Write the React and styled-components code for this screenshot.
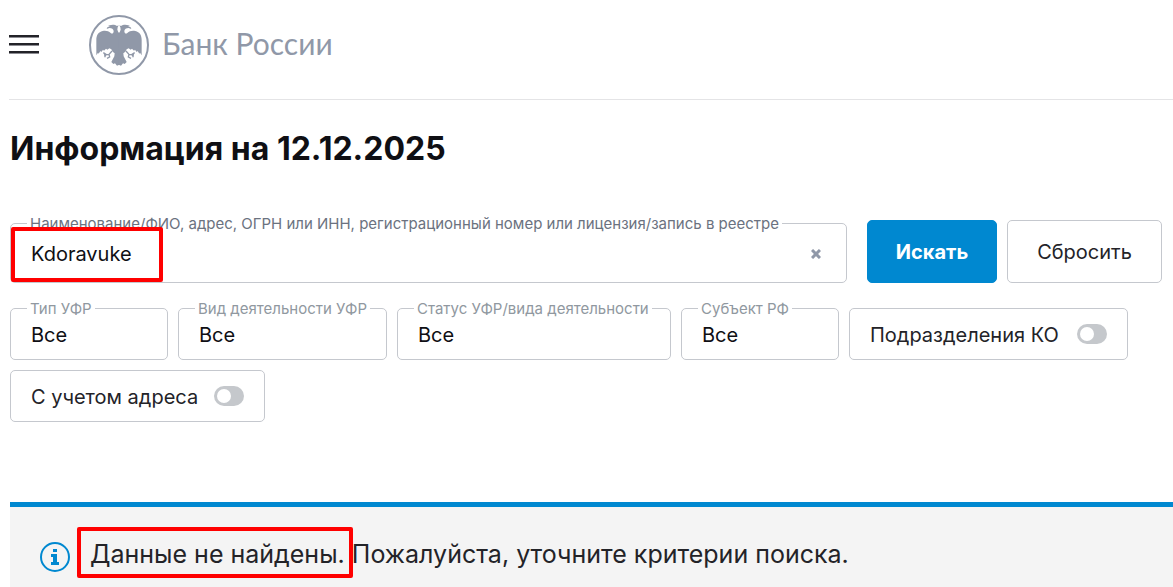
import React from 'react';
import styled, { createGlobalStyle } from 'styled-components';

const GlobalStyle = createGlobalStyle`
  * {
    box-sizing: border-box;
  }

  body {
    margin: 0;
    background: #fff;
    color: #232328;
    font-family: Inter, "Noto Sans", sans-serif;
    font-size: 20px;
    line-height: 24px;
  }

  button, input, select {
    font: inherit;
    color: inherit;
  }
`

const Page = styled.div`
  padding-left: 10px;
`

const Header = styled.header`
  display: flex;
  align-items: center;
  gap: 50px;
  height: 100px;
  padding-bottom: 10px;
  margin-left: -1px;
  border-bottom: 1px solid #e4e4e6;
`

const MenuButton = styled.button`
  display: flex;
  flex-direction: column;
  gap: 5px;
  padding: 0;
  border: 0;
  background: none;
  cursor: pointer;
`

const MenuLine = styled.span`
  width: 30px;
  height: 3px;
  border-bottom: 1px solid #8c8c92;
  background: #232328;
`

const Logo = styled.a`
  display: flex;
  align-items: center;
  gap: 13px;
  color: #9098a8;
  font-family: Lato, "Noto Sans", sans-serif;
  font-size: 30px;
  text-decoration: none;
`

const LogoText = styled.span`
  padding-bottom: 4px;
`

const Title = styled.h1`
  margin: 29px 0 51px;
  color: #0f0f14;
  font-size: 32px;
  font-weight: 700;
  line-height: 40px;
`

const Form = styled.form`
  padding-right: 11px;
`

const SearchRow = styled.div`
  display: flex;
  align-items: flex-end;
  gap: 10px;
  margin-bottom: 25px;
`

const Filters = styled.div`
  display: flex;
  flex-wrap: wrap;
  gap: 10px;
`

const Field = styled.div`
  position: relative;
  display: flex;
  align-items: center;
  width: ${props => props.$width || 'auto'};
  height: 52px;
  padding: 2px 20px 0;
  border: 1px solid #c5c8ce;
  border-radius: 5px;
`

const SearchField = styled(Field)`
  flex: 1;
  height: 60px;
  margin-right: 10px;
`

const FieldLabel = styled.label`
  position: absolute;
  top: -10px;
  left: 16px;
  padding: 0 3px;
  background: #fff;
  color: ${props => props.$dark ? '#6b7280' : '#9098a0'};
  font-size: 15px;
  line-height: 20px;
  white-space: nowrap;
`

const TextInput = styled.input`
  flex: 1;
  min-width: 0;
  padding: 0;
  border: 0;
  outline: 0;
  background: none;
  color: #0f0f14;
`

const Select = styled.select`
  width: 100%;
  padding: 0;
  border: 0;
  outline: 0;
  appearance: none;
  background: none;
  color: #0f0f14;
`

const ClearButton = styled.button`
  display: flex;
  padding: 5px;
  border: 0;
  background: none;
  cursor: pointer;
`

const Button = styled.button`
  width: ${props => props.$primary ? '130px' : '155px'};
  height: 63px;
  padding: 0;
  border: 1px solid ${props => props.$primary ? '#0088d0' : '#c5c8ce'};
  border-radius: 5px;
  background: ${props => props.$primary ? '#0088d0' : '#fff'};
  color: ${props => props.$primary ? '#fff' : '#232328'};
  font-weight: ${props => props.$primary ? 700 : 400};
  cursor: pointer;
`

const ToggleField = styled.label`
  display: flex;
  align-items: center;
  justify-content: space-between;
  width: ${props => props.$width};
  height: 52px;
  padding: 2px 20px 0;
  border: 1px solid #c5c8ce;
  border-radius: 5px;
  white-space: nowrap;
`

const Toggle = styled.input`
  display: flex;
  align-items: center;
  flex: none;
  width: 30px;
  height: 20px;
  margin: 0 0 2px;
  padding: 0 3px;
  border-radius: 10px;
  appearance: none;
  background: #c5c8cc;

  &::before {
    content: "";
    width: 14px;
    height: 14px;
    border-radius: 50%;
    background: #fff;
  }

  &:checked {
    justify-content: flex-end;
    background: #0088d0;
  }
`

const Message = styled.div`
  display: flex;
  align-items: center;
  gap: 20px;
  min-height: 85px;
  margin-top: 80px;
  padding: 20px 30px 0;
  border-top: 5px solid #0088d0;
  background: #f4f4f4;
`

const MessageText = styled.p`
  margin: 0 0 6px;
  font-size: 25px;
  line-height: 32px;
`

const Highlight = styled.span`
  position: relative;

  &::after {
    content: "";
    position: absolute;
    inset: -12px -8px -9px -13px;
    border: 4px solid #f00;
    border-radius: 2px;
  }
`

const FieldHighlight = styled.span`
  position: absolute;
  top: 3px;
  left: 0;
  width: 152px;
  height: 55px;
  border: 4px solid #f00;
  border-radius: 2px;
  pointer-events: none;
`

const EagleHalf = () => (
  <g>
    <path
      fill="currentColor"
      d="M91 54 L88 52 L85 44 L86 37 L89 31 L84 33 C79 29 69 28 62 31 L57 33 L63 34 L55 37 L53 42 L61 39 C69 39 73 43 74 48 C74 55 69 58 65 54 C59 48 50 46 41 48 C28 51 22 60 22 75 L22 121 L27 113 L29 116 L34 108 L37 111 L42 104 L45 107 L51 101 L55 104 L61 100 L67 103 L71 110 L77 115 L76 124 L67 141 L73 147 L78 145 L84 152 L91 149 Z"
    />
    <path
      fill="none"
      stroke="currentColor"
      strokeWidth="4"
      d="M69 108 L60 118 L45 120 M52 119 L43 113 M60 118 L62 126 L54 130 M50 120 L47 127"
    />
  </g>
)

const Emblem = () => (
  <svg width="60" height="60" viewBox="0 0 180 180" aria-hidden="true">
    <circle cx="90" cy="90" r="87" fill="none" stroke="currentColor" strokeWidth="6" />
    <EagleHalf />
    <g transform="matrix(-1 0 0 1 180 0)">
      <EagleHalf />
    </g>
  </svg>
)

const InfoIcon = () => (
  <svg width="30" height="30" viewBox="0 0 30 30" aria-hidden="true">
    <circle cx="15" cy="15" r="14" fill="none" stroke="#0088d0" strokeWidth="2" />
    <path fill="#0088d0" d="M13 7h4v3h-4zM11 12h6v8h2v3h-8v-3h2v-5h-2z" />
  </svg>
)

const filters = [
  { id: 'type', label: 'Тип УФР', width: '158px' },
  { id: 'activity', label: 'Вид деятельности УФР', width: '209px' },
  { id: 'status', label: 'Статус УФР/вида деятельности', width: '274px' },
  { id: 'region', label: 'Субъект РФ', width: '158px' },
]

const App = () => (
  <Page>
    <GlobalStyle />
    <Header>
      <MenuButton type="button" aria-label="Меню">
        <MenuLine />
        <MenuLine />
        <MenuLine />
      </MenuButton>
      <Logo href="/">
        <Emblem />
        <LogoText>Банк России</LogoText>
      </Logo>
    </Header>

    <main>
      <Title>Информация на 12.12.2025</Title>

      <Form onSubmit={e => e.preventDefault()}>
        <SearchRow>
          <SearchField>
            <FieldLabel htmlFor="search" $dark>
              Наименование/ФИО, адрес, ОГРН или ИНН, регистрационный номер или лицензия/запись в реестре
            </FieldLabel>
            <TextInput id="search" type="text" defaultValue="Kdoravuke" />
            <ClearButton type="button" aria-label="Очистить">
              <svg width="10" height="10" viewBox="0 0 10 10" aria-hidden="true">
                <path d="M1 1l8 8M9 1l-8 8" stroke="#9098a8" strokeWidth="3" />
              </svg>
            </ClearButton>
            <FieldHighlight />
          </SearchField>
          <Button type="submit" $primary>Искать</Button>
          <Button type="reset">Сбросить</Button>
        </SearchRow>

        <Filters>
          {filters.map(filter => (
            <Field key={filter.id} $width={filter.width}>
              <FieldLabel htmlFor={filter.id}>{filter.label}</FieldLabel>
              <Select id={filter.id}>
                <option>Все</option>
              </Select>
            </Field>
          ))}
          <ToggleField $width="279px">
            Подразделения КО
            <Toggle type="checkbox" />
          </ToggleField>
          <ToggleField $width="255px">
            С учетом адреса
            <Toggle type="checkbox" />
          </ToggleField>
        </Filters>
      </Form>

      <Message>
        <InfoIcon />
        <MessageText>
          <Highlight>Данные не найдены.</Highlight> Пожалуйста, уточните критерии поиска.
        </MessageText>
      </Message>
    </main>
  </Page>
)

export default App;
